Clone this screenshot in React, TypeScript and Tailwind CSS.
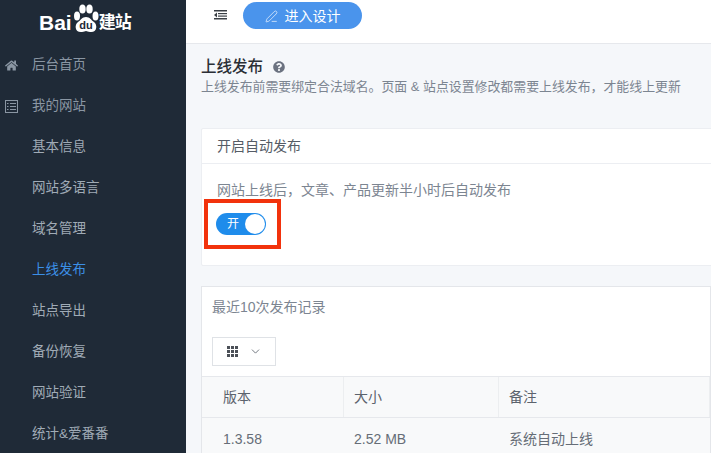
import { ChevronDown, PenLine } from 'lucide-react';
import { FaHome, FaQuestionCircle } from 'react-icons/fa';

const font = '"Liberation Sans", "Noto Sans CJK SC", sans-serif';

const subItems = ['基本信息', '网站多语言', '域名管理', '上线发布', '站点导出', '备份恢复', '网站验证', '统计&爱番番'];

const Logo = () => (
    <div className="flex h-[45px] shrink-0 items-end pl-[39px] pb-[11px] text-white">
        <span className="mr-[1px] text-[21px] leading-[22px] font-bold">Bai</span>
        <svg width="26" height="32" viewBox="0 0 26 32" className="-mb-[1px]" fill="white">
            <ellipse cx="4" cy="13" rx="3" ry="4.5" />
            <ellipse cx="9.5" cy="6" rx="3.2" ry="4.5" />
            <ellipse cx="16.5" cy="6" rx="3.2" ry="4.5" />
            <ellipse cx="22.5" cy="13" rx="3" ry="4.5" />
            <path d="M13 14c-4 0-5 3-8 5-4 3-3 11 4 10 2 0 3-1 4-1s2 1 4 1c7 1 8-7 4-10-3-2-4-5-8-5z" />
            <text x="13" y="26" textAnchor="middle" fontSize="11" fontWeight="700" fill="#1f2a37" fontFamily="Liberation Sans">du</text>
        </svg>
        <span className="text-[17px] leading-[22px] font-bold tracking-[-1px]">建站</span>
    </div>
);

const Sidebar = () => (
    <aside className="flex w-[186px] shrink-0 flex-col bg-[#1f2a37] text-[13.5px]">
        <Logo />
        <div className="flex h-[41px] shrink-0 items-center gap-[14px] pl-[5px] text-[#8a96a3]">
            <FaHome size={13} />
            <span>后台首页</span>
        </div>
        <div className="flex h-[41px] shrink-0 items-center gap-[14px] pl-[5px] text-[#8a96a3]">
            <svg width="13" height="13" viewBox="0 0 13 13" fill="none" stroke="currentColor">
                <rect x="0.5" y="0.5" width="12" height="12" />
                <path d="M2 3.5h1.5M5 3.5h6M2 6.5h1.5M5 6.5h6M2 9.5h1.5M5 9.5h6" />
            </svg>
            <span>我的网站</span>
        </div>
        {subItems.map((item) => (
            <div
                key={item}
                className={`flex h-[41px] shrink-0 items-center pl-[32px] ${item === '上线发布' ? 'text-[#3c8fe6]' : 'text-[#a0abb6]'}`}
            >
                {item}
            </div>
        ))}
    </aside>
);

const TopBar = () => (
    <div className="flex h-[44px] shrink-0 items-start gap-[16px] border-b border-[#e6e8ec] bg-white pl-[28px]">
        <svg width="13" height="10" viewBox="0 0 13 10" className="mt-[10px]" fill="#3a3f45">
            <rect x="0" y="0" width="13" height="1.5" />
            <rect x="4" y="3" width="9" height="1.2" />
            <rect x="4" y="5.5" width="9" height="1.2" />
            <rect x="0" y="8" width="13" height="1.5" />
            <path d="M3 2.5v5L0 5z" />
        </svg>
        <button className="mt-[2px] flex h-[27px] w-[119px] items-center justify-center gap-[7px] rounded-full bg-[#4a94ec] pt-[1px] text-[14px] text-white">
            <PenLine size={13} strokeWidth={1.2} />
            进入设计
        </button>
    </div>
);

const cols = ['版本', '大小', '备注'];

const Content = () => (
    <div className="flex flex-1 flex-col overflow-hidden bg-[#f5f7fa] pl-[15px]">
        <div className="-ml-[1px] flex h-[84px] shrink-0 flex-col pt-[12px] pl-[1px]">
            <div className="flex items-center gap-[10px] text-[15.5px] leading-[22px] font-medium text-[#2b2f36]">
                上线发布
                <FaQuestionCircle size={12} className="text-[#6b7280]" />
            </div>
            <p className="text-[12.9px] leading-[18px] whitespace-nowrap text-[#7c8591]">
                上线发布前需要绑定合法域名。页面 & 站点设置修改都需要上线发布，才能线上更新
            </p>
        </div>
        <section className="h-[138px] w-[540px] shrink-0 rounded-[2px] border border-[#eceef2] bg-white">
            <div className="flex h-[35px] items-center border-b border-[#eceef2] pl-[15px] text-[14px] text-[#555c66]">
                开启自动发布
            </div>
            <div className="pl-[15px] pt-[17px] text-[14px] leading-[18px] text-[#7c8591]">
                网站上线后，文章、产品更新半小时后自动发布
            </div>
            <div className="ml-[2px] flex h-[50px] w-[77px] items-center border-4 border-[#f2320c] pl-[8px]">
                <div className="flex h-[22px] w-[50px] items-center justify-between rounded-full bg-[#1f8ceb] pl-[11px] pr-[1px] text-[12px] text-white">
                    开
                    <span className="h-[20px] w-[20px] rounded-full bg-white" />
                </div>
            </div>
        </section>
        <section className="mt-[20px] flex-1 border border-[#e4e6ea] bg-white">
            <div className="pl-[10px] pt-[10px] text-[14px] leading-[20px] text-[#7c8591]">最近10次发布记录</div>
            <div className="ml-[10px] mt-[20px] flex h-[29px] w-[64px] items-center justify-center gap-[11px] border border-[#dfe2e6]">
                <div className="grid grid-cols-3 gap-[1px]">
                    {Array.from({ length: 9 }).map((_, i) => (
                        <span key={i} className="h-[3px] w-[3px] bg-[#4b5057]" />
                    ))}
                </div>
                <ChevronDown size={13} strokeWidth={1.5} className="text-[#555c66]" />
            </div>
            <div className="mt-[10px] flex h-[42px] border-y border-[#e6e8ec] bg-[#f8f9fa] text-[14px] text-[#5c636d]">
                {cols.map((c, i) => (
                    <div
                        key={c}
                        className={`flex items-center border-r border-[#eceef0] ${i === 0 ? 'w-[142px] pl-[21px]' : i === 1 ? 'w-[155px] pl-[10px]' : 'flex-1 pl-[10px]'}`}
                    >
                        {c}
                    </div>
                ))}
            </div>
            <div className="flex h-[40px] bg-[#f8f9fa] pt-[2px] text-[14px] text-[#666d77]">
                <div className="flex w-[142px] items-center pl-[21px]">1.3.58</div>
                <div className="flex w-[155px] items-center pl-[10px]">2.52 MB</div>
                <div className="flex flex-1 items-center pl-[10px]">系统自动上线</div>
            </div>
        </section>
    </div>
);

export default function App() {
    return (
        <div className="flex h-[453px] w-[711px] overflow-hidden" style={{ fontFamily: font }}>
            <Sidebar />
            <main className="flex min-w-0 flex-1 flex-col">
                <TopBar />
                <Content />
            </main>
        </div>
    );
}
